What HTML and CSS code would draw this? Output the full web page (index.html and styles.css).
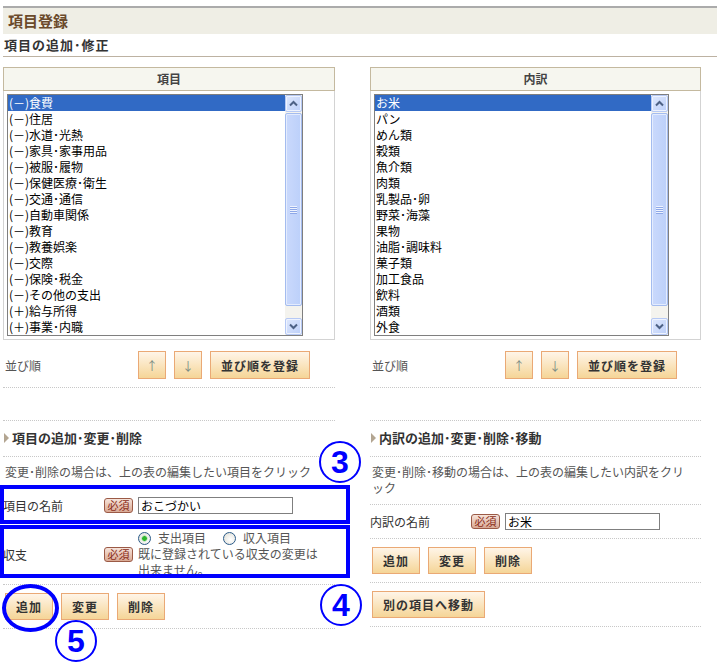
FILE: index.html
```
<!DOCTYPE html>
<html lang="ja">
<head>
	<meta charset="UTF-8">
	<title>項目登録</title>
	<link rel="stylesheet" href="styles.css">
</head>
<body>
	<div class="page">
		<h1 class="page-title">項目登録</h1>
		<h2 class="sub-title">項目の追加･修正</h2>
		<div class="columns">
			<!-- 項目 -->
			<div class="col">
				<div class="list-head">項目</div>
				<div class="list-body">
					<div class="listbox">
						<ul class="options">
							<li class="selected">(－)食費</li>
							<li>(－)住居</li>
							<li>(－)水道･光熱</li>
							<li>(－)家具･家事用品</li>
							<li>(－)被服･履物</li>
							<li>(－)保健医療･衛生</li>
							<li>(－)交通･通信</li>
							<li>(－)自動車関係</li>
							<li>(－)教育</li>
							<li>(－)教養娯楽</li>
							<li>(－)交際</li>
							<li>(－)保険･税金</li>
							<li>(－)その他の支出</li>
							<li>(＋)給与所得</li>
							<li>(＋)事業･内職</li>
						</ul>
						<div class="scrollbar">
							<span class="sb-btn"><svg width="15" height="15" viewBox="0 0 15 15"><path d="M4 9.5 L7.5 6 L11 9.5" fill="none" stroke="#4d6185" stroke-width="2"/></svg></span>
							<span class="sb-thumb"><span class="grip"></span></span>
							<span class="sb-track"></span>
							<span class="sb-btn"><svg width="15" height="15" viewBox="0 0 15 15"><path d="M4 5.5 L7.5 9 L11 5.5" fill="none" stroke="#4d6185" stroke-width="2"/></svg></span>
						</div>
					</div>
				</div>
				<div class="sort-row">
					<span class="sort-label">並び順</span>
					<button class="btn btn-arrow">↑</button>
					<button class="btn btn-arrow">↓</button>
					<button class="btn">並び順を登録</button>
				</div>
				<div class="blank-row"></div>
				<h3 class="sec-title">項目の追加･変更･削除</h3>
				<p class="note">変更･削除の場合は、上の表の編集したい項目をクリック</p>
				<div class="form-row">
					<span class="form-label">項目の名前</span>
					<span class="req">必須</span>
					<input type="text" class="text" value="おこづかい">
				</div>
				<div class="form-row">
					<span class="form-label">収支</span>
					<span class="req">必須</span>
					<div class="form-field">
						<div class="radios">
							<label><span class="radio checked"></span>支出項目</label>
							<label><span class="radio"></span>収入項目</label>
						</div>
						<p class="hint">既に登録されている収支の変更は出来ません。</p>
					</div>
				</div>
				<div class="btn-row">
					<button class="btn">追加</button>
					<button class="btn">変更</button>
					<button class="btn">削除</button>
				</div>
			</div>

			<!-- 内訳 -->
			<div class="col">
				<div class="list-head">内訳</div>
				<div class="list-body">
					<div class="listbox">
						<ul class="options">
							<li class="selected">お米</li>
							<li>パン</li>
							<li>めん類</li>
							<li>穀類</li>
							<li>魚介類</li>
							<li>肉類</li>
							<li>乳製品･卵</li>
							<li>野菜･海藻</li>
							<li>果物</li>
							<li>油脂･調味料</li>
							<li>菓子類</li>
							<li>加工食品</li>
							<li>飲料</li>
							<li>酒類</li>
							<li>外食</li>
						</ul>
						<div class="scrollbar">
							<span class="sb-btn"><svg width="15" height="15" viewBox="0 0 15 15"><path d="M4 9.5 L7.5 6 L11 9.5" fill="none" stroke="#4d6185" stroke-width="2"/></svg></span>
							<span class="sb-thumb"><span class="grip"></span></span>
							<span class="sb-track"></span>
							<span class="sb-btn"><svg width="15" height="15" viewBox="0 0 15 15"><path d="M4 5.5 L7.5 9 L11 5.5" fill="none" stroke="#4d6185" stroke-width="2"/></svg></span>
						</div>
					</div>
				</div>
				<div class="sort-row">
					<span class="sort-label">並び順</span>
					<button class="btn btn-arrow">↑</button>
					<button class="btn btn-arrow">↓</button>
					<button class="btn">並び順を登録</button>
				</div>
				<div class="blank-row"></div>
				<h3 class="sec-title">内訳の追加･変更･削除･移動</h3>
				<p class="note">変更･削除･移動の場合は、上の表の編集したい内訳をクリック</p>
				<div class="form-row">
					<span class="form-label">内訳の名前</span>
					<span class="req">必須</span>
					<input type="text" class="text" value="お米">
				</div>
				<div class="btn-row">
					<button class="btn">追加</button>
					<button class="btn">変更</button>
					<button class="btn">削除</button>
				</div>
				<div class="btn-row">
					<button class="btn">別の項目へ移動</button>
				</div>
			</div>
		</div>

		<!-- 注釈 -->
		<div class="mark-box box-1"></div>
		<div class="mark-box box-2"></div>
		<div class="mark-ring"></div>
		<span class="mark-num num-3">3</span>
		<span class="mark-num num-4">4</span>
		<span class="mark-num num-5">5</span>
	</div>
</body>
</html>
```

FILE: styles.css
```
body {
	margin: 0;
	font-size: 12px;
	font-family: "Noto Sans CJK JP", sans-serif;
	color: #333;
	background: #fff;
}

h1, h2, h3, p, ul, li {
	margin: 0;
	padding: 0;
}

.page {
	position: relative;
	width: 720px;
	height: 670px;
	padding: 6px 3px 0 3px;
	box-sizing: border-box;
}

.page-title {
	height: 26px;
	line-height: 26px;
	padding-left: 5px;
	border-top: 2px solid #ababab;
	background: #efeee5;
	font-size: 15px;
	font-weight: bold;
	color: #6b4a2b;
}

.sub-title {
	padding: 3px 0 3px 1px;
	line-height: 16px;
	border-bottom: 1px solid #bdb2a2;
	font-size: 13px;
	font-weight: bold;
	letter-spacing: 1px;
	color: #333;
}

.columns {
	display: grid;
	grid-template-columns: 332px 331px;
	column-gap: 35px;
	margin-top: 10px;
}

/* 一覧 */
.list-head {
	height: 22px;
	line-height: 22px;
	border: 1px solid #c4b99f;
	background: #f6f6ef;
	text-align: center;
	font-weight: bold;
	color: #444;
}

.list-body {
	padding: 3px 0 3px 3px;
	border: 1px solid #d3d3d3;
	border-top: none;
}

.listbox {
	display: flex;
	width: 296px;
	height: 242px;
	box-sizing: border-box;
	border: 1px solid #7f7f7f;
	background: #fff;
}

.col:last-child .listbox {
	width: 295px;
}

.options {
	flex: 1;
	list-style: none;
	overflow: hidden;
}

.options li {
	height: 16px;
	line-height: 16px;
	padding-left: 1px;
	color: #000;
	white-space: nowrap;
}

.options li.selected {
	background: #316ac5;
	color: #fff;
}

.scrollbar {
	display: flex;
	flex-direction: column;
	width: 17px;
	background: #f4f3ee;
}

.sb-btn {
	display: flex;
	align-items: center;
	justify-content: center;
	height: 17px;
	box-sizing: border-box;
	border: 1px solid #b6c9f5;
	border-radius: 2px;
	background: linear-gradient(135deg, #dfe8fd, #bccff9);
	box-shadow: inset 0 0 0 1px #eef3fe;
}

.sb-thumb {
	display: flex;
	align-items: center;
	justify-content: center;
	height: 193px;
	margin-top: 1px;
	box-sizing: border-box;
	border: 1px solid #a4bcef;
	border-radius: 2px;
	background: linear-gradient(90deg, #cad9fc, #bcd0fa);
	box-shadow: inset 0 0 0 1px #e4ecfe;
}

.grip {
	width: 7px;
	height: 8px;
	background: repeating-linear-gradient(#eef3fe 0 1px, #8ea8e8 1px 2px);
}

.sb-track {
	flex: 1;
}

/* ボタン */
.btn {
	height: 28px;
	padding: 0 10px;
	border: 1px solid #eaa975;
	background: linear-gradient(#fff5e8, #f5d597);
	font-family: "Noto Sans CJK JP", sans-serif;
	font-size: 12px;
	font-weight: bold;
	letter-spacing: 1px;
	color: #333;
	cursor: default;
}

.btn-arrow {
	width: 28px;
	padding: 0;
	font-weight: normal;
	letter-spacing: 0;
	color: #7c8c84;
}

.sort-row {
	display: flex;
	align-items: center;
	gap: 8px;
	padding: 11px 0 8px 0;
	border-bottom: 1px dotted #c8c8c8;
}

.sort-label {
	width: 125px;
	padding-left: 2px;
	color: #555;
}

.blank-row {
	height: 32px;
	border-bottom: 1px dotted #c8c8c8;
}

.sec-title {
	padding: 9px 0 10px 1px;
	line-height: 16px;
	border-bottom: 1px dotted #c8c8c8;
	font-size: 13px;
	font-weight: bold;
	color: #333;
}

.sec-title:before {
	content: "";
	display: inline-block;
	margin-right: 3px;
	border-top: 5px solid transparent;
	border-bottom: 5px solid transparent;
	border-left: 5px solid #b3a591;
}

.note {
	padding: 7px 9px 8px 2px;
	line-height: 16px;
	border-bottom: 1px dotted #c8c8c8;
	color: #555;
}

.form-row {
	display: flex;
	align-items: center;
	padding: 8px 0;
	border-bottom: 1px dotted #c8c8c8;
}

.form-row + .form-row {
	padding: 7px 0 6px 0;
}

.form-label {
	width: 101px;
	color: #333;
}

.req {
	width: 29px;
	height: 15px;
	margin-right: 5px;
	box-sizing: border-box;
	border: 1px solid #9b5a46;
	border-radius: 3px;
	background: linear-gradient(#f6e3da, #d9a994);
	font-size: 11px;
	line-height: 13px;
	text-align: center;
	color: #8a2c18;
}

.text {
	width: 155px;
	height: 17px;
	padding: 0 2px;
	box-sizing: border-box;
	border: 1px solid #7f7f7f;
	font-family: "Noto Sans CJK JP", sans-serif;
	font-size: 12px;
	color: #000;
}

.form-field {
	width: 186px;
	line-height: 16px;
	color: #555;
}

.radios {
	display: flex;
	gap: 17px;
}

.radios label {
	display: flex;
	align-items: center;
	gap: 7px;
}

.radio {
	width: 13px;
	height: 13px;
	box-sizing: border-box;
	border: 1px solid #2a5a88;
	border-radius: 50%;
	background: radial-gradient(circle at 60% 60%, #fff, #dcdcd4);
}

.radio.checked {
	background: radial-gradient(circle, #2fb52f 0 2px, #9bd89b 2.5px, transparent 3.5px), radial-gradient(circle at 60% 60%, #fff, #dcdcd4);
}

.btn-row {
	display: flex;
	gap: 8px;
	padding: 8px 0 8px 2px;
	border-bottom: 1px dotted #c8c8c8;
}

.btn-row .btn {
	height: 27px;
}

/* 注釈 */
.mark-box {
	position: absolute;
	left: 0;
	width: 350px;
	box-sizing: border-box;
	border: 4px solid #0000ff;
}

.box-1 {
	top: 485px;
	height: 39px;
}

.box-2 {
	top: 525px;
	height: 53px;
}

.mark-ring {
	position: absolute;
	left: 2px;
	top: 584px;
	width: 57px;
	height: 48px;
	box-sizing: border-box;
	border: 4px solid #0000ff;
	border-radius: 50%;
}

.mark-num {
	position: absolute;
	width: 42px;
	height: 42px;
	box-sizing: border-box;
	border: 2px solid #0000ff;
	border-radius: 50%;
	background: #fff;
	font-family: "Liberation Sans", sans-serif;
	font-size: 32px;
	font-weight: bold;
	line-height: 38px;
	text-align: center;
	color: #0000ff;
}

.num-3 {
	left: 319px;
	top: 441px;
}

.num-4 {
	left: 320px;
	top: 584px;
}

.num-5 {
	left: 55px;
	top: 620px;
}
```
